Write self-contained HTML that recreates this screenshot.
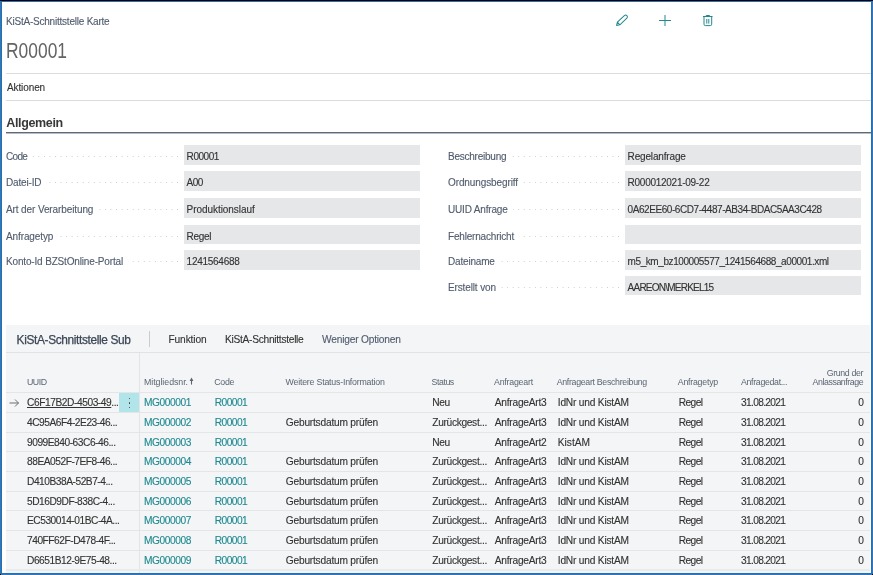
<!DOCTYPE html>
<html><head><meta charset="utf-8">
<style>
*{box-sizing:border-box;margin:0;padding:0}
html,body{width:873px;height:575px;overflow:hidden;background:#fff}
body{position:relative;font-family:"Liberation Sans",sans-serif;color:#333}
.a{position:absolute;white-space:nowrap;-webkit-text-stroke:0.12px currentColor}
.dots{height:1px;background-image:linear-gradient(to left,#c9ccd1 1px,transparent 1px);background-size:5.55px 1px;background-position:right top}
</style></head><body><div style="position:absolute;left:0;top:0;width:873px;height:575px;will-change:transform">
<div class="a" style="left:0px;top:0px;width:873px;height:1px;background:#000;"></div>
<div class="a" style="left:0px;top:1px;width:873px;height:1px;background:#2b6fb2;"></div>
<div class="a" style="left:0px;top:1px;width:1px;height:574px;background:#3377b9;"></div>
<div class="a" style="left:1px;top:2px;width:1px;height:572px;background:#2570b1;"></div>
<div class="a" style="left:872px;top:1px;width:1px;height:574px;background:#3377b9;"></div>
<div class="a" style="left:871px;top:2px;width:1px;height:572px;background:#2570b1;"></div>
<div class="a" style="left:0px;top:573px;width:873px;height:1px;background:#2570b1;"></div>
<div class="a" style="left:0px;top:574px;width:873px;height:1px;background:#3377b9;"></div>
<div class="a" style="left:0px;top:574px;width:1px;height:1px;background:#000;"></div>
<div class="a" style="left:872px;top:574px;width:1px;height:1px;background:#000;"></div>
<div class="a" style="left:6px;top:16.09px;font-size:10px;line-height:12px;letter-spacing:-0.22px;color:#505c6d;font-weight:400;">KiStA-Schnittstelle Karte</div>
<div class="a" style="left:6.2px;top:37.20px;font-size:22.2px;line-height:27px;letter-spacing:0px;color:#646464;font-weight:400;transform:scaleX(0.785);transform-origin:0 0;-webkit-text-stroke:0;">R00001</div>
<svg class="a" style="left:0;top:0" width="873" height="40" viewBox="0 0 873 40">
 <g stroke="#23898f" fill="none" stroke-width="1" stroke-linejoin="round">
 <g transform="translate(616.6 25.4) rotate(-43.5)"><path d="M0 0 L2.8 -1.8 H12.4 A1.8 1.8 0 0 1 12.4 1.8 H2.8 Z M2.8 -1.8 V1.8"/></g>
 <path d="M659 20.5 H671 M665 15 V26"/>
 <path d="M703 16.5 H712.5 M706.2 16 V15.5 H709.5 V16 M704 16.5 V24.2 Q704 25.6 705.4 25.6 H710.3 Q711.7 25.6 711.7 24.2 V16.5 M706.8 19 V23.6 M708.8 19 V23.6"/>
 </g></svg>
<div class="a" style="left:6px;top:73px;width:865px;height:1px;background:#dcdcdc;"></div>
<div class="a" style="left:7px;top:82.19px;font-size:10px;line-height:12px;letter-spacing:-0.11px;color:#333;font-weight:400;">Aktionen</div>
<div class="a" style="left:6px;top:100px;width:865px;height:1px;background:#dcdcdc;"></div>
<div class="a" style="left:6.3px;top:115.72px;font-size:12.5px;line-height:15px;letter-spacing:-0.35px;color:#383838;font-weight:700;-webkit-text-stroke:0;">Allgemein</div>
<div class="a" style="left:6px;top:132px;width:865px;height:1px;background:#5f6977;"></div>
<div class="a" style="left:6px;top:133px;width:865px;height:1px;background:#b9bec5;"></div>
<div class="a dots" style="left:6px;top:156px;width:172px"></div>
<div class="a" style="left:6px;top:150.69px;font-size:10px;line-height:12px;letter-spacing:-0.67px;color:#505c6d;font-weight:400;background:#fff;padding-right:5px;">Code</div>
<div class="a" style="left:184px;top:145px;width:236px;height:20px;background:#e6e7e9;"></div>
<div class="a" style="left:186.6px;top:150.69px;font-size:10px;line-height:12px;letter-spacing:-0.44px;color:#333;font-weight:400;">R00001</div>
<div class="a dots" style="left:6px;top:182px;width:172px"></div>
<div class="a" style="left:6px;top:176.69px;font-size:10px;line-height:12px;letter-spacing:-0.17px;color:#505c6d;font-weight:400;background:#fff;padding-right:5px;">Datei-ID</div>
<div class="a" style="left:184px;top:171px;width:236px;height:20px;background:#e6e7e9;"></div>
<div class="a" style="left:186.6px;top:176.69px;font-size:10px;line-height:12px;letter-spacing:-0.5px;color:#333;font-weight:400;">A00</div>
<div class="a dots" style="left:6px;top:209px;width:172px"></div>
<div class="a" style="left:6px;top:203.69px;font-size:10px;line-height:12px;letter-spacing:-0.11px;color:#505c6d;font-weight:400;background:#fff;padding-right:5px;">Art der Verarbeitung</div>
<div class="a" style="left:184px;top:198px;width:236px;height:20px;background:#e6e7e9;"></div>
<div class="a" style="left:186.6px;top:203.69px;font-size:10px;line-height:12px;letter-spacing:-0.06px;color:#333;font-weight:400;">Produktionslauf</div>
<div class="a dots" style="left:6px;top:236px;width:172px"></div>
<div class="a" style="left:6px;top:230.69px;font-size:10px;line-height:12px;letter-spacing:-0.11px;color:#505c6d;font-weight:400;background:#fff;padding-right:5px;">Anfragetyp</div>
<div class="a" style="left:184px;top:225px;width:236px;height:19px;background:#e6e7e9;"></div>
<div class="a" style="left:186.6px;top:230.69px;font-size:10px;line-height:12px;letter-spacing:-0.3px;color:#333;font-weight:400;">Regel</div>
<div class="a dots" style="left:6px;top:261px;width:172px"></div>
<div class="a" style="left:6px;top:255.70px;font-size:10px;line-height:12px;letter-spacing:-0.16px;color:#505c6d;font-weight:400;background:#fff;padding-right:5px;">Konto-Id BZStOnline-Portal</div>
<div class="a" style="left:184px;top:250px;width:236px;height:20px;background:#e6e7e9;"></div>
<div class="a" style="left:186.6px;top:255.70px;font-size:10px;line-height:12px;letter-spacing:-0.27px;color:#333;font-weight:400;">1241564688</div>
<div class="a dots" style="left:448px;top:156px;width:171px"></div>
<div class="a" style="left:448px;top:150.69px;font-size:10px;line-height:12px;letter-spacing:-0.24px;color:#505c6d;font-weight:400;background:#fff;padding-right:5px;">Beschreibung</div>
<div class="a" style="left:625px;top:145px;width:236px;height:20px;background:#e6e7e9;"></div>
<div class="a" style="left:627.6px;top:150.69px;font-size:10px;line-height:12px;letter-spacing:-0.16px;color:#333;font-weight:400;">Regelanfrage</div>
<div class="a dots" style="left:448px;top:182px;width:171px"></div>
<div class="a" style="left:448px;top:176.69px;font-size:10px;line-height:12px;letter-spacing:-0.1px;color:#505c6d;font-weight:400;background:#fff;padding-right:5px;">Ordnungsbegriff</div>
<div class="a" style="left:625px;top:171px;width:236px;height:20px;background:#e6e7e9;"></div>
<div class="a" style="left:627.6px;top:176.69px;font-size:10px;line-height:12px;letter-spacing:-0.27px;color:#333;font-weight:400;">R000012021-09-22</div>
<div class="a dots" style="left:448px;top:209px;width:171px"></div>
<div class="a" style="left:448px;top:203.69px;font-size:10px;line-height:12px;letter-spacing:-0.18px;color:#505c6d;font-weight:400;background:#fff;padding-right:5px;">UUID Anfrage</div>
<div class="a" style="left:625px;top:198px;width:236px;height:20px;background:#e6e7e9;"></div>
<div class="a" style="left:627.6px;top:203.69px;font-size:10px;line-height:12px;letter-spacing:-0.43px;color:#333;font-weight:400;">0A62EE60-6CD7-4487-AB34-BDAC5AA3C428</div>
<div class="a dots" style="left:448px;top:236px;width:171px"></div>
<div class="a" style="left:448px;top:230.69px;font-size:10px;line-height:12px;letter-spacing:-0.19px;color:#505c6d;font-weight:400;background:#fff;padding-right:5px;">Fehlernachricht</div>
<div class="a" style="left:625px;top:225px;width:236px;height:19px;background:#e6e7e9;"></div>
<div class="a dots" style="left:448px;top:261px;width:171px"></div>
<div class="a" style="left:448px;top:255.70px;font-size:10px;line-height:12px;letter-spacing:-0.18px;color:#505c6d;font-weight:400;background:#fff;padding-right:5px;">Dateiname</div>
<div class="a" style="left:625px;top:250px;width:236px;height:20px;background:#e6e7e9;"></div>
<div class="a" style="left:627.6px;top:255.70px;font-size:10px;line-height:12px;letter-spacing:-0.42px;color:#333;font-weight:400;">m5_km_bz100005577_1241564688_a00001.xml</div>
<div class="a dots" style="left:448px;top:287px;width:171px"></div>
<div class="a" style="left:448px;top:281.69px;font-size:10px;line-height:12px;letter-spacing:-0.13px;color:#505c6d;font-weight:400;background:#fff;padding-right:5px;">Erstellt von</div>
<div class="a" style="left:625px;top:276px;width:236px;height:19px;background:#e6e7e9;"></div>
<div class="a" style="left:627.6px;top:281.69px;font-size:10px;line-height:12px;letter-spacing:-0.77px;color:#333;font-weight:400;">AAREON\MERKEL15</div>
<div class="a" style="left:6px;top:325px;width:864px;height:248px;background:#f4f5f7;"></div>
<div class="a" style="left:16.6px;top:333.20px;font-size:11.9px;line-height:14px;letter-spacing:-0.36px;color:#3c4654;font-weight:400;-webkit-text-stroke:0.25px #3c4654">KiStA-Schnittstelle Sub</div>
<div class="a" style="left:149px;top:331px;width:1px;height:16px;background:#c9cbce;"></div>
<div class="a" style="left:168.5px;top:334.27px;font-size:10.2px;line-height:12px;letter-spacing:-0.14px;color:#333;font-weight:400;">Funktion</div>
<div class="a" style="left:225px;top:334.27px;font-size:10.2px;line-height:12px;letter-spacing:-0.28px;color:#333;font-weight:400;">KiStA-Schnittstelle</div>
<div class="a" style="left:322px;top:334.27px;font-size:10.2px;line-height:12px;letter-spacing:-0.2px;color:#505c6d;font-weight:400;">Weniger Optionen</div>
<div class="a" style="left:6px;top:352px;width:864px;height:1px;background:#e1e2e4;"></div>
<div class="a" style="left:139px;top:353px;width:1px;height:220px;background:#e3e4e6;"></div>
<div class="a" style="left:27px;top:377.25px;font-size:8.8px;line-height:11px;letter-spacing:-0.5px;color:#5b6572;font-weight:400;-webkit-text-stroke:0;">UUID</div>
<div class="a" style="left:144px;top:377.25px;font-size:8.8px;line-height:11px;letter-spacing:-0.04px;color:#5b6572;font-weight:400;-webkit-text-stroke:0;">Mitgliedsnr.</div>
<div class="a" style="left:214.3px;top:377.25px;font-size:8.8px;line-height:11px;letter-spacing:-0.33px;color:#5b6572;font-weight:400;-webkit-text-stroke:0;">Code</div>
<div class="a" style="left:285.6px;top:377.25px;font-size:8.8px;line-height:11px;letter-spacing:-0.21px;color:#5b6572;font-weight:400;-webkit-text-stroke:0;">Weitere Status-Information</div>
<div class="a" style="left:431.5px;top:377.25px;font-size:8.8px;line-height:11px;letter-spacing:-0.44px;color:#5b6572;font-weight:400;-webkit-text-stroke:0;">Status</div>
<div class="a" style="left:494px;top:377.25px;font-size:8.8px;line-height:11px;letter-spacing:-0.22px;color:#5b6572;font-weight:400;-webkit-text-stroke:0;">Anfrageart</div>
<div class="a" style="left:556.7px;top:377.25px;font-size:8.8px;line-height:11px;letter-spacing:-0.31px;color:#5b6572;font-weight:400;-webkit-text-stroke:0;">Anfrageart Beschreibung</div>
<div class="a" style="left:677.8px;top:377.25px;font-size:8.8px;line-height:11px;letter-spacing:-0.24px;color:#5b6572;font-weight:400;-webkit-text-stroke:0;">Anfragetyp</div>
<div class="a" style="left:741px;top:377.25px;font-size:8.8px;line-height:11px;letter-spacing:-0.33px;color:#5b6572;font-weight:400;-webkit-text-stroke:0;">Anfragedat...</div>
<svg class="a" style="left:186px;top:374px" width="10" height="14" viewBox="186 374 10 14"><path d="M189.6 381 L191.5 377.6 L193.4 381 Z" fill="#5d6470"/><path d="M191.5 380 V384.6" stroke="#5d6470" stroke-width="1.1"/></svg>
<div class="a" style="left:812.5px;top:377.25px;font-size:8.8px;line-height:11px;letter-spacing:-0.42px;color:#5b6572;font-weight:400;-webkit-text-stroke:0;">Anlassanfrage</div>
<div class="a" style="left:817px;top:368.45px;font-size:8.8px;line-height:11px;letter-spacing:-0.38px;color:#5b6572;font-weight:400;width:46px;text-align:right;-webkit-text-stroke:0;">Grund der</div>
<div class="a" style="left:6px;top:392px;width:864px;height:1px;background:#e4e5e7;"></div>
<div class="a" style="left:6px;top:412px;width:864px;height:1px;background:#e4e5e7;"></div>
<div class="a" style="left:119px;top:393px;width:20px;height:19px;background:#b2e5ea;"></div>
<div class="a" style="left:128.5px;top:397.5px;width:1.6px;height:1.6px;background:#3a3a3a;border-radius:1px"></div>
<div class="a" style="left:128.5px;top:402px;width:1.6px;height:1.6px;background:#3a3a3a;border-radius:1px"></div>
<div class="a" style="left:128.5px;top:406.5px;width:1.6px;height:1.6px;background:#3a3a3a;border-radius:1px"></div>
<svg class="a" style="left:8px;top:397px" width="12" height="12" viewBox="0 0 12 12"><path d="M1.5 6 H10.5 M7 2.5 L10.5 6 L7 9.5" stroke="#606060" stroke-width="0.9" fill="none"/></svg>
<div class="a" style="left:27px;top:397.17px;font-size:10.2px;line-height:12px;letter-spacing:-0.43px;color:#333;font-weight:400;"><span style="text-decoration:underline">C6F17B2D-4503-49</span>...</div>
<div class="a" style="left:144px;top:397.17px;font-size:10.2px;line-height:12px;letter-spacing:-0.43px;color:#1f8a90;font-weight:400;">MG000001</div>
<div class="a" style="left:214.8px;top:397.17px;font-size:10.2px;line-height:12px;letter-spacing:-0.56px;color:#1f8a90;font-weight:400;">R00001</div>
<div class="a" style="left:432.3px;top:397.17px;font-size:10.2px;line-height:12px;letter-spacing:-0.4px;color:#333;font-weight:400;">Neu</div>
<div class="a" style="left:494.8px;top:397.17px;font-size:10.2px;line-height:12px;letter-spacing:-0.24px;color:#333;font-weight:400;">AnfrageArt3</div>
<div class="a" style="left:557.8px;top:397.17px;font-size:10.2px;line-height:12px;letter-spacing:-0.21px;color:#333;font-weight:400;">IdNr und KistAM</div>
<div class="a" style="left:678.7px;top:397.17px;font-size:10.2px;line-height:12px;letter-spacing:-0.55px;color:#333;font-weight:400;">Regel</div>
<div class="a" style="left:741px;top:397.17px;font-size:10.2px;line-height:12px;letter-spacing:-0.67px;color:#333;font-weight:400;">31.08.2021</div>
<div class="a" style="left:858.3px;top:397.17px;font-size:10.2px;line-height:12px;letter-spacing:0px;color:#333;font-weight:400;">0</div>
<div class="a" style="left:6px;top:432px;width:864px;height:1px;background:#e4e5e7;"></div>
<div class="a" style="left:27px;top:416.84px;font-size:10.2px;line-height:12px;letter-spacing:-0.47px;color:#333;font-weight:400;">4C95A6F4-2E23-46...</div>
<div class="a" style="left:144px;top:416.84px;font-size:10.2px;line-height:12px;letter-spacing:-0.43px;color:#1f8a90;font-weight:400;">MG000002</div>
<div class="a" style="left:214.8px;top:416.84px;font-size:10.2px;line-height:12px;letter-spacing:-0.56px;color:#1f8a90;font-weight:400;">R00001</div>
<div class="a" style="left:285.8px;top:416.84px;font-size:10.2px;line-height:12px;letter-spacing:-0.22px;color:#333;font-weight:400;">Geburtsdatum prüfen</div>
<div class="a" style="left:432.3px;top:416.84px;font-size:10.2px;line-height:12px;letter-spacing:-0.33px;color:#333;font-weight:400;">Zurückgest...</div>
<div class="a" style="left:494.8px;top:416.84px;font-size:10.2px;line-height:12px;letter-spacing:-0.24px;color:#333;font-weight:400;">AnfrageArt3</div>
<div class="a" style="left:557.8px;top:416.84px;font-size:10.2px;line-height:12px;letter-spacing:-0.21px;color:#333;font-weight:400;">IdNr und KistAM</div>
<div class="a" style="left:678.7px;top:416.84px;font-size:10.2px;line-height:12px;letter-spacing:-0.55px;color:#333;font-weight:400;">Regel</div>
<div class="a" style="left:741px;top:416.84px;font-size:10.2px;line-height:12px;letter-spacing:-0.67px;color:#333;font-weight:400;">31.08.2021</div>
<div class="a" style="left:858.3px;top:416.84px;font-size:10.2px;line-height:12px;letter-spacing:0px;color:#333;font-weight:400;">0</div>
<div class="a" style="left:6px;top:451px;width:864px;height:1px;background:#e4e5e7;"></div>
<div class="a" style="left:27px;top:436.50px;font-size:10.2px;line-height:12px;letter-spacing:-0.47px;color:#333;font-weight:400;">9099E840-63C6-46...</div>
<div class="a" style="left:144px;top:436.50px;font-size:10.2px;line-height:12px;letter-spacing:-0.43px;color:#1f8a90;font-weight:400;">MG000003</div>
<div class="a" style="left:214.8px;top:436.50px;font-size:10.2px;line-height:12px;letter-spacing:-0.56px;color:#1f8a90;font-weight:400;">R00001</div>
<div class="a" style="left:432.3px;top:436.50px;font-size:10.2px;line-height:12px;letter-spacing:-0.4px;color:#333;font-weight:400;">Neu</div>
<div class="a" style="left:494.8px;top:436.50px;font-size:10.2px;line-height:12px;letter-spacing:-0.24px;color:#333;font-weight:400;">AnfrageArt2</div>
<div class="a" style="left:557.8px;top:436.50px;font-size:10.2px;line-height:12px;letter-spacing:0.0px;color:#333;font-weight:400;">KistAM</div>
<div class="a" style="left:678.7px;top:436.50px;font-size:10.2px;line-height:12px;letter-spacing:-0.55px;color:#333;font-weight:400;">Regel</div>
<div class="a" style="left:741px;top:436.50px;font-size:10.2px;line-height:12px;letter-spacing:-0.67px;color:#333;font-weight:400;">31.08.2021</div>
<div class="a" style="left:858.3px;top:436.50px;font-size:10.2px;line-height:12px;letter-spacing:0px;color:#333;font-weight:400;">0</div>
<div class="a" style="left:6px;top:471px;width:864px;height:1px;background:#e4e5e7;"></div>
<div class="a" style="left:27px;top:456.17px;font-size:10.2px;line-height:12px;letter-spacing:-0.47px;color:#333;font-weight:400;">88EA052F-7EF8-46...</div>
<div class="a" style="left:144px;top:456.17px;font-size:10.2px;line-height:12px;letter-spacing:-0.43px;color:#1f8a90;font-weight:400;">MG000004</div>
<div class="a" style="left:214.8px;top:456.17px;font-size:10.2px;line-height:12px;letter-spacing:-0.56px;color:#1f8a90;font-weight:400;">R00001</div>
<div class="a" style="left:285.8px;top:456.17px;font-size:10.2px;line-height:12px;letter-spacing:-0.22px;color:#333;font-weight:400;">Geburtsdatum prüfen</div>
<div class="a" style="left:432.3px;top:456.17px;font-size:10.2px;line-height:12px;letter-spacing:-0.33px;color:#333;font-weight:400;">Zurückgest...</div>
<div class="a" style="left:494.8px;top:456.17px;font-size:10.2px;line-height:12px;letter-spacing:-0.24px;color:#333;font-weight:400;">AnfrageArt3</div>
<div class="a" style="left:557.8px;top:456.17px;font-size:10.2px;line-height:12px;letter-spacing:-0.21px;color:#333;font-weight:400;">IdNr und KistAM</div>
<div class="a" style="left:678.7px;top:456.17px;font-size:10.2px;line-height:12px;letter-spacing:-0.55px;color:#333;font-weight:400;">Regel</div>
<div class="a" style="left:741px;top:456.17px;font-size:10.2px;line-height:12px;letter-spacing:-0.67px;color:#333;font-weight:400;">31.08.2021</div>
<div class="a" style="left:858.3px;top:456.17px;font-size:10.2px;line-height:12px;letter-spacing:0px;color:#333;font-weight:400;">0</div>
<div class="a" style="left:6px;top:491px;width:864px;height:1px;background:#e4e5e7;"></div>
<div class="a" style="left:27px;top:475.84px;font-size:10.2px;line-height:12px;letter-spacing:-0.47px;color:#333;font-weight:400;">D410B38A-52B7-4...</div>
<div class="a" style="left:144px;top:475.84px;font-size:10.2px;line-height:12px;letter-spacing:-0.43px;color:#1f8a90;font-weight:400;">MG000005</div>
<div class="a" style="left:214.8px;top:475.84px;font-size:10.2px;line-height:12px;letter-spacing:-0.56px;color:#1f8a90;font-weight:400;">R00001</div>
<div class="a" style="left:285.8px;top:475.84px;font-size:10.2px;line-height:12px;letter-spacing:-0.22px;color:#333;font-weight:400;">Geburtsdatum prüfen</div>
<div class="a" style="left:432.3px;top:475.84px;font-size:10.2px;line-height:12px;letter-spacing:-0.33px;color:#333;font-weight:400;">Zurückgest...</div>
<div class="a" style="left:494.8px;top:475.84px;font-size:10.2px;line-height:12px;letter-spacing:-0.24px;color:#333;font-weight:400;">AnfrageArt3</div>
<div class="a" style="left:557.8px;top:475.84px;font-size:10.2px;line-height:12px;letter-spacing:-0.21px;color:#333;font-weight:400;">IdNr und KistAM</div>
<div class="a" style="left:678.7px;top:475.84px;font-size:10.2px;line-height:12px;letter-spacing:-0.55px;color:#333;font-weight:400;">Regel</div>
<div class="a" style="left:741px;top:475.84px;font-size:10.2px;line-height:12px;letter-spacing:-0.67px;color:#333;font-weight:400;">31.08.2021</div>
<div class="a" style="left:858.3px;top:475.84px;font-size:10.2px;line-height:12px;letter-spacing:0px;color:#333;font-weight:400;">0</div>
<div class="a" style="left:6px;top:510px;width:864px;height:1px;background:#e4e5e7;"></div>
<div class="a" style="left:27px;top:495.50px;font-size:10.2px;line-height:12px;letter-spacing:-0.47px;color:#333;font-weight:400;">5D16D9DF-838C-4...</div>
<div class="a" style="left:144px;top:495.50px;font-size:10.2px;line-height:12px;letter-spacing:-0.43px;color:#1f8a90;font-weight:400;">MG000006</div>
<div class="a" style="left:214.8px;top:495.50px;font-size:10.2px;line-height:12px;letter-spacing:-0.56px;color:#1f8a90;font-weight:400;">R00001</div>
<div class="a" style="left:285.8px;top:495.50px;font-size:10.2px;line-height:12px;letter-spacing:-0.22px;color:#333;font-weight:400;">Geburtsdatum prüfen</div>
<div class="a" style="left:432.3px;top:495.50px;font-size:10.2px;line-height:12px;letter-spacing:-0.33px;color:#333;font-weight:400;">Zurückgest...</div>
<div class="a" style="left:494.8px;top:495.50px;font-size:10.2px;line-height:12px;letter-spacing:-0.24px;color:#333;font-weight:400;">AnfrageArt3</div>
<div class="a" style="left:557.8px;top:495.50px;font-size:10.2px;line-height:12px;letter-spacing:-0.21px;color:#333;font-weight:400;">IdNr und KistAM</div>
<div class="a" style="left:678.7px;top:495.50px;font-size:10.2px;line-height:12px;letter-spacing:-0.55px;color:#333;font-weight:400;">Regel</div>
<div class="a" style="left:741px;top:495.50px;font-size:10.2px;line-height:12px;letter-spacing:-0.67px;color:#333;font-weight:400;">31.08.2021</div>
<div class="a" style="left:858.3px;top:495.50px;font-size:10.2px;line-height:12px;letter-spacing:0px;color:#333;font-weight:400;">0</div>
<div class="a" style="left:6px;top:530px;width:864px;height:1px;background:#e4e5e7;"></div>
<div class="a" style="left:27px;top:515.17px;font-size:10.2px;line-height:12px;letter-spacing:-0.47px;color:#333;font-weight:400;">EC530014-01BC-4A...</div>
<div class="a" style="left:144px;top:515.17px;font-size:10.2px;line-height:12px;letter-spacing:-0.43px;color:#1f8a90;font-weight:400;">MG000007</div>
<div class="a" style="left:214.8px;top:515.17px;font-size:10.2px;line-height:12px;letter-spacing:-0.56px;color:#1f8a90;font-weight:400;">R00001</div>
<div class="a" style="left:285.8px;top:515.17px;font-size:10.2px;line-height:12px;letter-spacing:-0.22px;color:#333;font-weight:400;">Geburtsdatum prüfen</div>
<div class="a" style="left:432.3px;top:515.17px;font-size:10.2px;line-height:12px;letter-spacing:-0.33px;color:#333;font-weight:400;">Zurückgest...</div>
<div class="a" style="left:494.8px;top:515.17px;font-size:10.2px;line-height:12px;letter-spacing:-0.24px;color:#333;font-weight:400;">AnfrageArt3</div>
<div class="a" style="left:557.8px;top:515.17px;font-size:10.2px;line-height:12px;letter-spacing:-0.21px;color:#333;font-weight:400;">IdNr und KistAM</div>
<div class="a" style="left:678.7px;top:515.17px;font-size:10.2px;line-height:12px;letter-spacing:-0.55px;color:#333;font-weight:400;">Regel</div>
<div class="a" style="left:741px;top:515.17px;font-size:10.2px;line-height:12px;letter-spacing:-0.67px;color:#333;font-weight:400;">31.08.2021</div>
<div class="a" style="left:858.3px;top:515.17px;font-size:10.2px;line-height:12px;letter-spacing:0px;color:#333;font-weight:400;">0</div>
<div class="a" style="left:6px;top:550px;width:864px;height:1px;background:#e4e5e7;"></div>
<div class="a" style="left:27px;top:534.84px;font-size:10.2px;line-height:12px;letter-spacing:-0.47px;color:#333;font-weight:400;">740FF62F-D478-4F...</div>
<div class="a" style="left:144px;top:534.84px;font-size:10.2px;line-height:12px;letter-spacing:-0.43px;color:#1f8a90;font-weight:400;">MG000008</div>
<div class="a" style="left:214.8px;top:534.84px;font-size:10.2px;line-height:12px;letter-spacing:-0.56px;color:#1f8a90;font-weight:400;">R00001</div>
<div class="a" style="left:285.8px;top:534.84px;font-size:10.2px;line-height:12px;letter-spacing:-0.22px;color:#333;font-weight:400;">Geburtsdatum prüfen</div>
<div class="a" style="left:432.3px;top:534.84px;font-size:10.2px;line-height:12px;letter-spacing:-0.33px;color:#333;font-weight:400;">Zurückgest...</div>
<div class="a" style="left:494.8px;top:534.84px;font-size:10.2px;line-height:12px;letter-spacing:-0.24px;color:#333;font-weight:400;">AnfrageArt3</div>
<div class="a" style="left:557.8px;top:534.84px;font-size:10.2px;line-height:12px;letter-spacing:-0.21px;color:#333;font-weight:400;">IdNr und KistAM</div>
<div class="a" style="left:678.7px;top:534.84px;font-size:10.2px;line-height:12px;letter-spacing:-0.55px;color:#333;font-weight:400;">Regel</div>
<div class="a" style="left:741px;top:534.84px;font-size:10.2px;line-height:12px;letter-spacing:-0.67px;color:#333;font-weight:400;">31.08.2021</div>
<div class="a" style="left:858.3px;top:534.84px;font-size:10.2px;line-height:12px;letter-spacing:0px;color:#333;font-weight:400;">0</div>
<div class="a" style="left:6px;top:569px;width:864px;height:2px;background:#eaebec;"></div>
<div class="a" style="left:27px;top:554.50px;font-size:10.2px;line-height:12px;letter-spacing:-0.47px;color:#333;font-weight:400;">D6651B12-9E75-48...</div>
<div class="a" style="left:144px;top:554.50px;font-size:10.2px;line-height:12px;letter-spacing:-0.43px;color:#1f8a90;font-weight:400;">MG000009</div>
<div class="a" style="left:214.8px;top:554.50px;font-size:10.2px;line-height:12px;letter-spacing:-0.56px;color:#1f8a90;font-weight:400;">R00001</div>
<div class="a" style="left:285.8px;top:554.50px;font-size:10.2px;line-height:12px;letter-spacing:-0.22px;color:#333;font-weight:400;">Geburtsdatum prüfen</div>
<div class="a" style="left:432.3px;top:554.50px;font-size:10.2px;line-height:12px;letter-spacing:-0.33px;color:#333;font-weight:400;">Zurückgest...</div>
<div class="a" style="left:494.8px;top:554.50px;font-size:10.2px;line-height:12px;letter-spacing:-0.24px;color:#333;font-weight:400;">AnfrageArt3</div>
<div class="a" style="left:557.8px;top:554.50px;font-size:10.2px;line-height:12px;letter-spacing:-0.21px;color:#333;font-weight:400;">IdNr und KistAM</div>
<div class="a" style="left:678.7px;top:554.50px;font-size:10.2px;line-height:12px;letter-spacing:-0.55px;color:#333;font-weight:400;">Regel</div>
<div class="a" style="left:741px;top:554.50px;font-size:10.2px;line-height:12px;letter-spacing:-0.67px;color:#333;font-weight:400;">31.08.2021</div>
<div class="a" style="left:858.3px;top:554.50px;font-size:10.2px;line-height:12px;letter-spacing:0px;color:#333;font-weight:400;">0</div>
</div></body></html>
